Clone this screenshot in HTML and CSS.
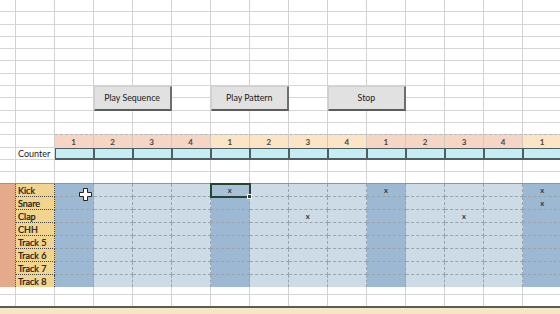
FILE: index.html
```html
<!DOCTYPE html>
<html lang="en">
<head>
<meta charset="utf-8">
<title>Drum Sequencer</title>
<link rel="stylesheet" href="styles.css">
</head>
<body>
<div class="sheet">
  <div class="hlines">
    <div></div><div></div><div></div><div></div><div></div>
    <div></div><div></div><div></div><div></div><div></div>
    <div></div><div></div><div></div><div></div><div></div>
    <div></div><div></div><div></div><div></div><div></div>
    <div></div><div></div><div></div><div></div><div></div>
  </div>
  <div class="vlines">
    <div></div><div></div><div></div><div></div><div></div>
    <div></div><div></div><div></div><div></div><div></div>
    <div></div><div></div><div></div><div></div><div></div>
  </div>

  <button class="btn btn-seq">Play Sequence</button>
  <button class="btn btn-pat">Play Pattern</button>
  <button class="btn btn-stop">Stop</button>

  <div class="steps">
    <div class="h1">1</div><div class="h1">2</div><div class="h1">3</div><div class="h1">4</div>
    <div class="h2">1</div><div class="h2">2</div><div class="h2">3</div><div class="h2">4</div>
    <div class="h1">1</div><div class="h1">2</div><div class="h1">3</div><div class="h1">4</div>
    <div class="h2">1</div>
  </div>

  <div class="counter-label">Counter</div>
  <div class="counter">
    <div></div><div></div><div></div><div></div><div></div><div></div><div></div>
    <div></div><div></div><div></div><div></div><div></div><div></div>
  </div>

  <div class="tracks">
    <div class="ta"></div>
    <div class="tl">Kick</div><div class="ts"></div><div class="tb"></div><div class="tb"></div><div class="tb"></div><div class="ts sel">x</div><div class="tb"></div><div class="tb"></div><div class="tb"></div><div class="ts">x</div><div class="tb"></div><div class="tb"></div><div class="tb"></div><div class="ts">x</div>
    <div class="tl">Snare</div><div class="ts"></div><div class="tb"></div><div class="tb"></div><div class="tb"></div><div class="ts"></div><div class="tb"></div><div class="tb"></div><div class="tb"></div><div class="ts"></div><div class="tb"></div><div class="tb"></div><div class="tb"></div><div class="ts">x</div>
    <div class="tl">Clap</div><div class="ts"></div><div class="tb"></div><div class="tb"></div><div class="tb"></div><div class="ts"></div><div class="tb"></div><div class="tb">x</div><div class="tb"></div><div class="ts"></div><div class="tb"></div><div class="tb">x</div><div class="tb"></div><div class="ts"></div>
    <div class="tl">CHH</div><div class="ts"></div><div class="tb"></div><div class="tb"></div><div class="tb"></div><div class="ts"></div><div class="tb"></div><div class="tb"></div><div class="tb"></div><div class="ts"></div><div class="tb"></div><div class="tb"></div><div class="tb"></div><div class="ts"></div>
    <div class="tl">Track 5</div><div class="ts"></div><div class="tb"></div><div class="tb"></div><div class="tb"></div><div class="ts"></div><div class="tb"></div><div class="tb"></div><div class="tb"></div><div class="ts"></div><div class="tb"></div><div class="tb"></div><div class="tb"></div><div class="ts"></div>
    <div class="tl">Track 6</div><div class="ts"></div><div class="tb"></div><div class="tb"></div><div class="tb"></div><div class="ts"></div><div class="tb"></div><div class="tb"></div><div class="tb"></div><div class="ts"></div><div class="tb"></div><div class="tb"></div><div class="tb"></div><div class="ts"></div>
    <div class="tl">Track 7</div><div class="ts"></div><div class="tb"></div><div class="tb"></div><div class="tb"></div><div class="ts"></div><div class="tb"></div><div class="tb"></div><div class="tb"></div><div class="ts"></div><div class="tb"></div><div class="tb"></div><div class="tb"></div><div class="ts"></div>
    <div class="tl last">Track 8</div><div class="ts"></div><div class="tb"></div><div class="tb"></div><div class="tb"></div><div class="ts"></div><div class="tb"></div><div class="tb"></div><div class="tb"></div><div class="ts"></div><div class="tb"></div><div class="tb"></div><div class="tb"></div><div class="ts"></div>
  </div>

  <div class="status"></div>

  <svg class="cursor" width="13" height="13" viewBox="0 0 13 13">
    <path d="M4.5 0.5h4v4h4v4h-4v4h-4v-4h-4v-4h4z" fill="#fff" stroke="#222" stroke-width="1"/>
  </svg>
</div>
</body>
</html>
```
FILE: styles.css
```css
html, body {
  margin: 0;
  padding: 0;
  background: #fff;
}

.sheet {
  position: relative;
  width: 560px;
  height: 314px;
  overflow: hidden;
  display: grid;
  grid-template-columns: 16px 38.5px repeat(13, 39.06px);
  grid-template-rows: repeat(25, 12.3px) 1fr;
  font-family: Lato, "Liberation Sans", sans-serif;
  color: #1a1a1a;
}

.hlines {
  grid-area: 1 / 1 / 26 / -1;
  display: grid;
  grid-template-rows: repeat(25, 1fr);
}
.hlines > div {
  border-bottom: 1px solid #d6d6d6;
}

.vlines {
  grid-area: 1 / 1 / 26 / -1;
  display: grid;
  grid-template-columns: inherit;
}
.vlines > div {
  border-right: 1px solid #d2d2d2;
}

.btn {
  margin: 0;
  padding: 0;
  font-family: Lato, "Liberation Sans", sans-serif;
  font-size: 8.8px;
  color: #1a1a1a;
  background: #e1e1e1;
  border: 1px solid #cfcfcf;
  border-right: 2px solid #6e6e6e;
  border-bottom: 2px solid #5c5c5c;
  border-radius: 0;
}
.btn-seq { grid-area: 8 / 4 / 10 / 6; }
.btn-pat { grid-area: 8 / 7 / 10 / 9; }
.btn-stop { grid-area: 8 / 10 / 10 / 12; }

.steps {
  grid-area: 12 / 3 / 13 / 16;
  display: grid;
  grid-template-columns: repeat(13, 1fr);
  border-top: 1px dashed #b9b9b9;
  margin-top: -1px;
}
.steps > div {
  display: flex;
  align-items: center;
  justify-content: center;
  padding-top: 1px;
  font-size: 8px;
  font-weight: 700;
  color: #444;
  border-right: 1px solid #d2c7bd;
}
.h1 { background: #f6d5c5; }
.h2 { background: #fbe5c4; }

.counter-label {
  grid-area: 13 / 2;
  font-size: 9px;
  padding-left: 2px;
  display: flex;
  align-items: center;
}

.counter {
  grid-area: 13 / 3 / 14 / 16;
  display: grid;
  grid-template-columns: repeat(13, 1fr);
}
.counter > div {
  background: #c4eef3;
  border: 1px solid #4f5e62;
  border-bottom-width: 2px;
}

.tracks {
  grid-area: 16 / 1 / 24 / -1;
  display: grid;
  grid-template-columns: inherit;
  grid-template-rows: repeat(8, 1fr);
  border-top: 1px solid #8d949a;
  border-bottom: 1px solid #6f767c;
  margin-top: -1px;
}
.ta {
  grid-column: 1;
  grid-row: 1 / -1;
  background: #e5aa8b;
  border-right: 1px dotted #555;
}
.tl {
  background: #f1d48e;
  border-right: 1px dotted #444;
  border-bottom: 1px dotted #444;
  font-size: 9px;
  color: #111;
  padding-left: 2px;
  padding-top: 1px;
  display: flex;
  align-items: center;
  white-space: nowrap;
  -webkit-text-stroke: 0.2px #111;
}
.tl.last { border-bottom: 0; }
.ts, .tb {
  border-right: 1px dashed #98a4ae;
  border-bottom: 1px dashed #98a4ae;
  display: flex;
  align-items: center;
  justify-content: center;
  font-size: 7.5px;
  font-weight: 700;
  color: #333;
}
.ts { background: #9db8d2; }
.tb { background: #cddbe6; }
.tracks > div:nth-last-child(-n+14) { border-bottom: 0; }

.sel {
  position: relative;
  outline: 2px solid #26472e;
  outline-offset: -1px;
  background: #a9c1d8;
}
.sel::after {
  content: "";
  position: absolute;
  right: -3px;
  bottom: -3px;
  width: 3px;
  height: 3px;
  background: #26472e;
  border: 1px solid #fff;
}

.status {
  grid-area: 26 / 1 / 27 / -1;
  background: #f6e6c6;
  border-top: 2px solid #5b5b5b;
  margin-top: -1px;
}

.cursor {
  position: absolute;
  left: 79px;
  top: 188px;
}
```
